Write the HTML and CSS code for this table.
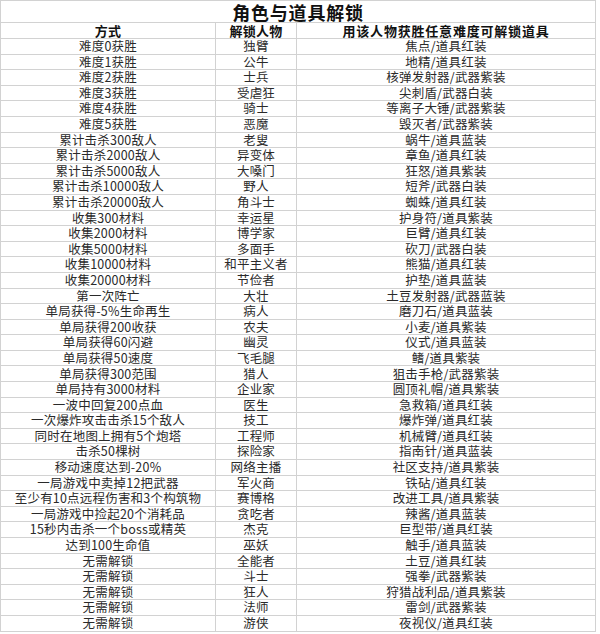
FILE: index.html
```html
<!DOCTYPE html>
<html lang="zh-CN">
<head>
<meta charset="utf-8">
<title>角色与道具解锁</title>
<link rel="stylesheet" href="styles.css">
</head>
<body>
<div class="sheet">
  <div class="title">角色与道具解锁</div>
  <div class="row head"><div>方式</div><div>解锁人物</div><div class="wide">用该人物获胜任意难度可解锁道具</div></div>
  <div class="row"><div>难度0获胜</div><div>独臂</div><div>焦点/道具红装</div></div>
  <div class="row"><div>难度1获胜</div><div>公牛</div><div>地精/道具红装</div></div>
  <div class="row"><div>难度2获胜</div><div>士兵</div><div>核弹发射器/武器紫装</div></div>
  <div class="row"><div>难度3获胜</div><div>受虐狂</div><div>尖刺盾/武器白装</div></div>
  <div class="row"><div>难度4获胜</div><div>骑士</div><div>等离子大锤/武器紫装</div></div>
  <div class="row"><div>难度5获胜</div><div>恶魔</div><div>毁灭者/武器紫装</div></div>
  <div class="row"><div>累计击杀300敌人</div><div>老叟</div><div>蜗牛/道具蓝装</div></div>
  <div class="row"><div>累计击杀2000敌人</div><div>异变体</div><div>章鱼/道具红装</div></div>
  <div class="row"><div>累计击杀5000敌人</div><div>大嗓门</div><div>狂怒/道具紫装</div></div>
  <div class="row"><div>累计击杀10000敌人</div><div>野人</div><div>短斧/武器白装</div></div>
  <div class="row"><div>累计击杀20000敌人</div><div>角斗士</div><div>蜘蛛/道具红装</div></div>
  <div class="row"><div>收集300材料</div><div>幸运星</div><div>护身符/道具紫装</div></div>
  <div class="row"><div>收集2000材料</div><div>博学家</div><div>巨臂/道具红装</div></div>
  <div class="row"><div>收集5000材料</div><div>多面手</div><div>砍刀/武器白装</div></div>
  <div class="row"><div>收集10000材料</div><div>和平主义者</div><div>熊猫/道具红装</div></div>
  <div class="row"><div>收集20000材料</div><div>节俭者</div><div>护垫/道具蓝装</div></div>
  <div class="row"><div>第一次阵亡</div><div>大壮</div><div>土豆发射器/武器蓝装</div></div>
  <div class="row"><div>单局获得-5%生命再生</div><div>病人</div><div>磨刀石/道具蓝装</div></div>
  <div class="row"><div>单局获得200收获</div><div>农夫</div><div>小麦/道具紫装</div></div>
  <div class="row"><div>单局获得60闪避</div><div>幽灵</div><div>仪式/道具蓝装</div></div>
  <div class="row"><div>单局获得50速度</div><div>飞毛腿</div><div>鳍/道具紫装</div></div>
  <div class="row"><div>单局获得300范围</div><div>猎人</div><div>狙击手枪/武器紫装</div></div>
  <div class="row"><div>单局持有3000材料</div><div>企业家</div><div>圆顶礼帽/道具紫装</div></div>
  <div class="row"><div>一波中回复200点血</div><div>医生</div><div>急救箱/道具红装</div></div>
  <div class="row"><div>一次爆炸攻击击杀15个敌人</div><div>技工</div><div>爆炸弹/道具红装</div></div>
  <div class="row"><div>同时在地图上拥有5个炮塔</div><div>工程师</div><div>机械臂/道具红装</div></div>
  <div class="row"><div>击杀50棵树</div><div>探险家</div><div>指南针/道具蓝装</div></div>
  <div class="row"><div>移动速度达到-20%</div><div>网络主播</div><div>社区支持/道具紫装</div></div>
  <div class="row"><div>一局游戏中卖掉12把武器</div><div>军火商</div><div>铁砧/道具红装</div></div>
  <div class="row"><div>至少有10点远程伤害和3个构筑物</div><div>赛博格</div><div>改进工具/道具紫装</div></div>
  <div class="row"><div>一局游戏中捡起20个消耗品</div><div>贪吃者</div><div>辣酱/道具蓝装</div></div>
  <div class="row"><div>15秒内击杀一个boss或精英</div><div>杰克</div><div>巨型带/道具红装</div></div>
  <div class="row"><div>达到100生命值</div><div>巫妖</div><div>触手/道具蓝装</div></div>
  <div class="row"><div>无需解锁</div><div>全能者</div><div>土豆/道具红装</div></div>
  <div class="row"><div>无需解锁</div><div>斗士</div><div>强拳/武器紫装</div></div>
  <div class="row"><div>无需解锁</div><div>狂人</div><div>狩猎战利品/道具紫装</div></div>
  <div class="row"><div>无需解锁</div><div>法师</div><div>雷剑/武器紫装</div></div>
  <div class="row"><div>无需解锁</div><div>游侠</div><div>夜视仪/道具红装</div></div>
</div>
</body>
</html>
```

FILE: styles.css
```css
html, body {
  margin: 0;
  padding: 0;
  background: #ffffff;
}

body {
  font-family: "Noto Sans CJK SC", "Noto Sans", sans-serif;
  color: #2a2a2a;
}

.sheet {
  display: grid;
  grid-template-columns: 214px 80px 298px;
  grid-template-rows: 21px 15px repeat(38, 14.6px);
  gap: 1px;
  width: 594px;
  background: #d2d2d2;
  border: 1px solid #d2d2d2;
}

.row {
  display: contents;
}

.title,
.row > div {
  background: #ffffff;
  display: flex;
  align-items: center;
  justify-content: center;
  white-space: nowrap;
}

.title {
  grid-column: 1 / -1;
  font-size: 18px;
  font-weight: 700;
  letter-spacing: 0.8px;
  color: #111;
  line-height: 1;
}

.row > div {
  font-size: 12.5px;
  line-height: 1;
  letter-spacing: 0.2px;
}

.head > div {
  font-size: 13px;
  font-weight: 700;
  color: #111;
}

.head > .wide {
  letter-spacing: 0.8px;
}
```
